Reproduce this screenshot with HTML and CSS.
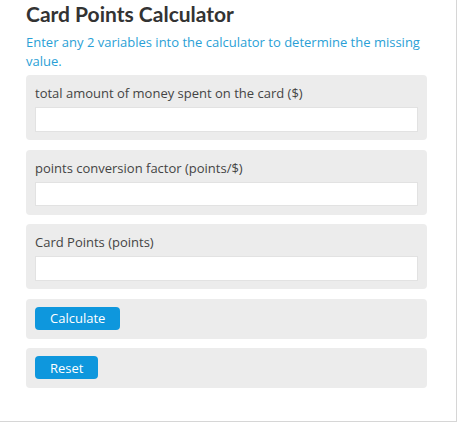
FILE: index.html
```html
<!DOCTYPE html>
<html lang="en">
<head>
    <meta charset="UTF-8">
    <meta name="viewport" content="width=device-width, initial-scale=1.0">
    <title>Card Points Calculator</title>
    <link rel="stylesheet" href="styles.css">
</head>
<body>

<div class="calc-container">
    <h1>Card Points Calculator</h1>
    <p class="intro">Enter any 2 variables into the calculator to determine the missing value.</p>

    <form class="calc-form">
        <div class="calc-row">
            <label for="spent">total amount of money spent on the card ($)</label>
            <input type="text" id="spent">
        </div>

        <div class="calc-row">
            <label for="factor">points conversion factor (points/$)</label>
            <input type="text" id="factor">
        </div>

        <div class="calc-row">
            <label for="points">Card Points (points)</label>
            <input type="text" id="points">
        </div>

        <div class="calc-row button-row">
            <button type="button" class="calc-btn">Calculate</button>
        </div>

        <div class="calc-row button-row">
            <button type="reset" class="calc-btn">Reset</button>
        </div>
    </form>
</div>

</body>
</html>
```

FILE: styles.css
```css
* {
    margin: 0;
    padding: 0;
    box-sizing: border-box;
}

body {
    font-family: "Open Sans", sans-serif;
    background-color: #fff;
    color: #333;
}

.calc-container {
    width: 457px;
    height: 422px;
    padding: 2px 29px 0 26px;
    border-right: 1px solid #d6d6d6;
    border-bottom: 1px solid #d6d6d6;
}

h1 {
    font-family: Lato, sans-serif;
    font-size: 21px;
    line-height: 24px;
    font-weight: bold;
    color: #333;
}

.intro {
    margin-top: 7px;
    font-size: 13px;
    line-height: 19px;
    color: #2a9fd6;
}

.calc-form {
    margin-top: 4px;
}

.calc-row {
    background-color: #ececec;
    border-radius: 4px;
    padding: 9px 9px 8.5px;
    margin-bottom: 9.5px;
}

.calc-row label {
    display: block;
    font-size: 13px;
    line-height: 18px;
    color: #444;
    margin-bottom: 5px;
}

.calc-row input {
    display: block;
    width: 100%;
    height: 24.5px;
    border: 1px solid #e2e2e2;
    background-color: #fff;
}

.button-row {
    padding: 8px 9px 9px;
}

.calc-btn {
    display: block;
    height: 23px;
    padding: 0 15px;
    border: none;
    border-radius: 4px;
    background-color: #0e97dd;
    color: #fff;
    font-family: "Open Sans", sans-serif;
    font-size: 13px;
}
```
